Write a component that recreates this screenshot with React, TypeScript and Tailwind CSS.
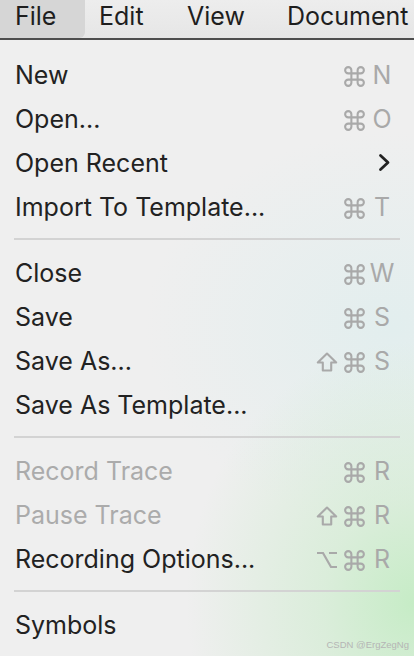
import { Command } from 'lucide-react'

type Item = {
  label: string
  keys?: string[]
  letter?: string
  submenu?: boolean
  disabled?: boolean
}

const groups: Item[][] = [
  [
    { label: 'New', keys: ['cmd'], letter: 'N' },
    { label: 'Open...', keys: ['cmd'], letter: 'O' },
    { label: 'Open Recent', submenu: true },
    { label: 'Import To Template...', keys: ['cmd'], letter: 'T' },
  ],
  [
    { label: 'Close', keys: ['cmd'], letter: 'W' },
    { label: 'Save', keys: ['cmd'], letter: 'S' },
    { label: 'Save As...', keys: ['shift', 'cmd'], letter: 'S' },
    { label: 'Save As Template...' },
  ],
  [
    { label: 'Record Trace', keys: ['cmd'], letter: 'R', disabled: true },
    { label: 'Pause Trace', keys: ['shift', 'cmd'], letter: 'R', disabled: true },
    { label: 'Recording Options...', keys: ['opt', 'cmd'], letter: 'R' },
  ],
  [{ label: 'Symbols' }],
]

function KeyGlyph({ k }: Readonly<{ k: string }>) {
  if (k === 'cmd') return <Command size={25} strokeWidth={2} />
  if (k === 'shift')
    return (
      <svg width="22" height="20" viewBox="0 0 22 20" fill="none" stroke="currentColor" strokeWidth="2.1" strokeLinejoin="round">
        <path d="M11 1.5 1.8 10.5h5v8h8.4v-8h5z" />
      </svg>
    )
  return (
    <svg width="22" height="18" viewBox="0 0 22 18" fill="none" stroke="currentColor" strokeWidth="2.2">
      <path d="M1 2h6l8 14h6M13 2h8" />
    </svg>
  )
}

function Row({ item }: Readonly<{ item: Item }>) {
  return (
    <div className="h-[44px] flex items-center pt-[4px] pl-[15px] pr-[17px]">
      <span className={`flex-1 text-[25px] ${item.disabled ? 'text-[#ababab]' : 'text-[#222]'}`}>
        {item.label}
      </span>
      {item.keys && (
        <span className="flex items-center text-[#a9a9a9]">
          {item.keys.map((k) => (
            <span key={k} className={`${k === 'cmd' ? 'w-[26px]' : 'w-[28px]'} flex justify-center`}>
              <KeyGlyph k={k} />
            </span>
          ))}
          <span className="w-[30px] flex justify-center text-[25px]">{item.letter}</span>
        </span>
      )}
      {item.submenu && (
        <svg width="13" height="19" viewBox="0 0 13 19" fill="none" stroke="#222" strokeWidth="2.8" strokeLinecap="round" strokeLinejoin="round" className="mr-[6px] -mt-[3px]">
          <path d="M2.5 2.5 10 9.5 2.5 16.5" />
        </svg>
      )}
    </div>
  )
}

export default function App() {
  return (
    <div className="w-[414px] h-[656px] overflow-hidden relative bg-[#efefef] font-['Inter',sans-serif] bg-[radial-gradient(ellipse_55%_40%_at_100%_92%,#c6ecc6_0%,rgba(205,236,205,0.6)_40%,transparent_100%),radial-gradient(ellipse_60%_30%_at_95%_50%,#e2eeee_0%,transparent_100%)]">
      <div className="h-[40px] flex items-stretch text-[25px] text-[#1e1e1e] bg-[linear-gradient(#ededed,#e6e6e6)] border-b-2 border-[#4e4e4e]">
        <div className="w-[85px] pl-[15px] pb-[5px] flex items-center bg-[#d6d6d6] rounded-br-[6px]">File</div>
        <div className="w-[100px] pl-[14px] pb-[5px] flex items-center">Edit</div>
        <div className="w-[101px] pl-[2px] pb-[5px] flex items-center">View</div>
        <div className="pl-[1px] pb-[5px] flex items-center">Document</div>
      </div>
      <div className="pt-[12px]">
        {groups.map((g, i) => (
          <div key={i}>
            {i > 0 && (
              <div className="h-[22px] flex items-center px-[14px]">
                <div className="h-[2px] w-full bg-[#d3d3d3]" />
              </div>
            )}
            {g.map((item) => (
              <Row key={item.label} item={item} />
            ))}
          </div>
        ))}
      </div>
      <div className="absolute right-[5px] bottom-[4px] text-[9.5px] text-[#b5b5b5] font-['Liberation_Sans',sans-serif]">
        CSDN @ErgZegNg
      </div>
    </div>
  )
}
